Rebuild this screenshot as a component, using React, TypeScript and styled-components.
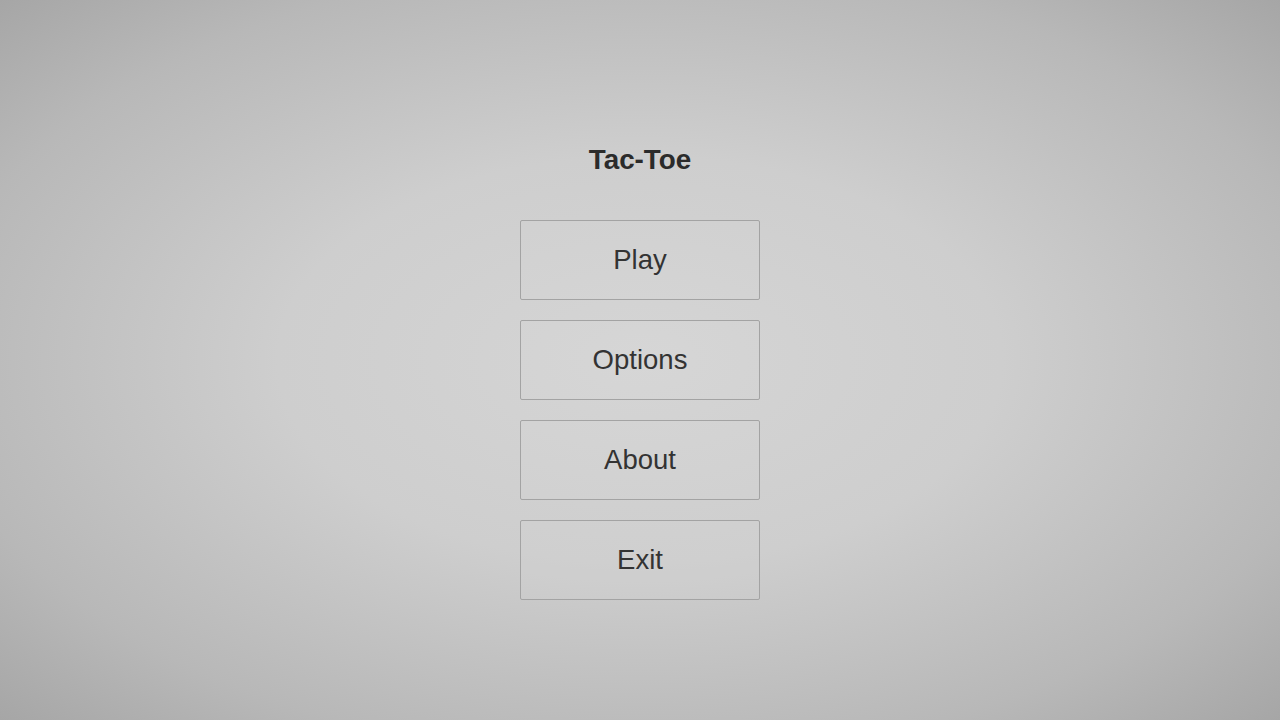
import styled, { createGlobalStyle } from "styled-components";

const GlobalStyle = createGlobalStyle`
  html, body {
    margin: 0;
    padding: 0;
    height: 100%;
  }
  body {
    font-family: "Liberation Sans", Arial, sans-serif;
    background: radial-gradient(ellipse at 50% 50%, #d5d5d5 0%, #cecece 40%, #b8b8b8 78%, #a6a6a6 100%);
    overflow: hidden;
  }
`;

const Screen = styled.main`
  width: 100vw;
  height: 100vh;
  display: flex;
  flex-direction: column;
  align-items: center;
  padding-top: 145px;
  box-sizing: border-box;
`;

const Title = styled.h1`
  margin: 0 0 45px;
  font-size: 27.8px;
  line-height: 30px;
  font-weight: 700;
  color: #2b2b2b;
`;

const Menu = styled.nav`
  display: flex;
  flex-direction: column;
  gap: 20px;
`;

const MenuButton = styled.button`
  width: 240px;
  height: 80px;
  box-sizing: border-box;
  border: 1px solid #a3a3a3;
  border-radius: 2px;
  background: rgba(255, 255, 255, 0.04);
  font-family: "Liberation Sans", Arial, sans-serif;
  font-size: 27.5px;
  color: #333;
  cursor: pointer;
  padding: 0;
`;

const items = ["Play", "Options", "About", "Exit"];

export default () => {
  return (
    <>
      <GlobalStyle />
      <Screen>
        <Title>Tac-Toe</Title>
        <Menu>
          {items.map((label) => (
            <MenuButton key={label}>{label}</MenuButton>
          ))}
        </Menu>
      </Screen>
    </>
  );
};
